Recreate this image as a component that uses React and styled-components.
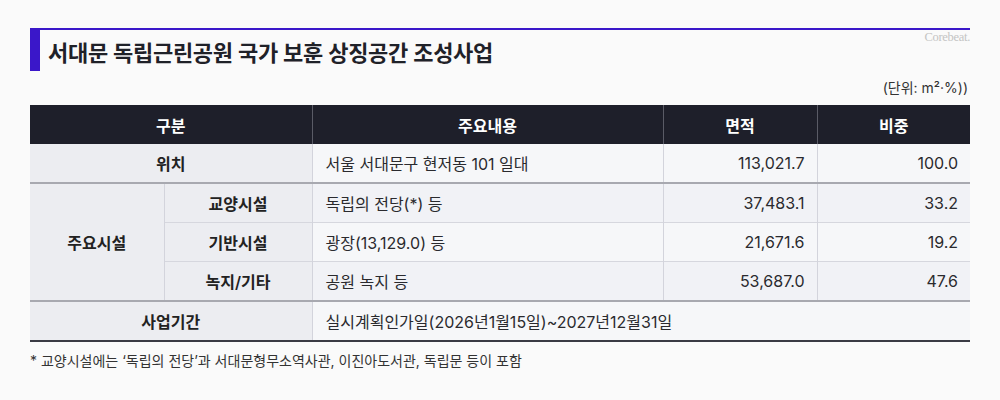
import React from 'react';
import styled, { createGlobalStyle } from 'styled-components';

const GlobalStyle = createGlobalStyle`
  body {
    margin: 0;
    background: #fafafa;
    font-family: "Inter", "Noto Sans CJK KR", sans-serif;
    color: #222;
  }
`;

const Page = styled.div`
  width: 1000px;
  height: 400px;
  padding: 28px 30px 0;
  box-sizing: border-box;
`;

const TitleBar = styled.div`
  display: flex;
  align-items: center;
  justify-content: space-between;
  border-top: 2px solid #3a17c9;
  height: 41px;
`;

const Title = styled.h1`
  margin: 0;
  height: 100%;
  display: flex;
  align-items: center;
  border-left: 10px solid #3a17c9;
  padding-left: 8px;
  font-size: 22px;
  font-weight: 600;
  letter-spacing: -0.3px;
  color: #1f2128;
`;

const Brand = styled.span`
  align-self: flex-start;
  font-family: "Liberation Serif", serif;
  font-size: 12.5px;
  color: #c4c4c4;
  letter-spacing: -0.3px;
`;

const Unit = styled.div`
  text-align: right;
  font-size: 14px;
  color: #333;
  margin: 5px 2px 5px 0;
  line-height: 24px;
`;

const Table = styled.table`
  width: 940px;
  border-collapse: collapse;
  table-layout: fixed;
  font-size: 16px;
  border-bottom: 2px solid #3a3b44;
`;

const HeadCell = styled.th`
  background: #1e1f2a;
  color: #fff;
  height: 39px;
  padding: 0;
  font-weight: 600;
  font-size: 16px;
  border-left: 1px solid #5a5b66;
  &:first-child {
    border-left: none;
  }
`;

const Row = styled.tr`
  border-top: ${p => (p.$major ? '2px solid #a8a9b0' : '1px solid #d6d7de')};
`;

const LabelCell = styled.td`
  background: #ecedf1;
  text-align: center;
  font-weight: 600;
  height: 38px;
  padding: 0;
  color: #222;
  border-right: 1px solid #d3d4dc;
`;

const DataCell = styled.td`
  background: ${p => (p.$shade ? '#f1f2f6' : '#f6f7f9')};
  text-align: ${p => (p.$num ? 'right' : 'left')};
  padding: ${p => (p.$num ? '0 12px 0 0' : '0 0 0 13px')};
  height: 38px;
  color: #2a2a2e;
  border-left: 1px solid #d3d4dc;
`;

const Note = styled.p`
  margin: 8px 0 0;
  font-size: 14px;
  color: #333;
`;

const facilities = [
  { name: '교양시설', desc: '독립의 전당(*) 등', area: '37,483.1', ratio: '33.2' },
  { name: '기반시설', desc: '광장(13,129.0) 등', area: '21,671.6', ratio: '19.2' },
  { name: '녹지/기타', desc: '공원 녹지 등', area: '53,687.0', ratio: '47.6' },
];

export default function App() {
  return (
    <Page>
      <GlobalStyle />
      <TitleBar>
        <Title>서대문 독립근린공원 국가 보훈 상징공간 조성사업</Title>
        <Brand>Corebeat.</Brand>
      </TitleBar>
      <Unit>(단위: m²·%))</Unit>
      <Table>
        <colgroup>
          <col style={{ width: 134 }} />
          <col style={{ width: 148 }} />
          <col style={{ width: 351 }} />
          <col style={{ width: 154 }} />
          <col style={{ width: 153 }} />
        </colgroup>
        <thead>
          <tr>
            <HeadCell colSpan={2}>구분</HeadCell>
            <HeadCell>주요내용</HeadCell>
            <HeadCell>면적</HeadCell>
            <HeadCell>비중</HeadCell>
          </tr>
        </thead>
        <tbody>
          <tr>
            <LabelCell colSpan={2}>위치</LabelCell>
            <DataCell>서울 서대문구 현저동 101 일대</DataCell>
            <DataCell $num>113,021.7</DataCell>
            <DataCell $num>100.0</DataCell>
          </tr>
          {facilities.map((f, i) => (
            <Row key={f.name} $major={i === 0}>
              {i === 0 && <LabelCell rowSpan={3}>주요시설</LabelCell>}
              <LabelCell>{f.name}</LabelCell>
              <DataCell $shade={i !== 1}>{f.desc}</DataCell>
              <DataCell $shade={i !== 1} $num>{f.area}</DataCell>
              <DataCell $shade={i !== 1} $num>{f.ratio}</DataCell>
            </Row>
          ))}
          <Row $major>
            <LabelCell colSpan={2}>사업기간</LabelCell>
            <DataCell colSpan={3}>실시계획인가일(2026년1월15일)~2027년12월31일</DataCell>
          </Row>
        </tbody>
      </Table>
      <Note>* 교양시설에는 ‘독립의 전당’과 서대문형무소역사관, 이진아도서관, 독립문 등이 포함</Note>
    </Page>
  );
}
